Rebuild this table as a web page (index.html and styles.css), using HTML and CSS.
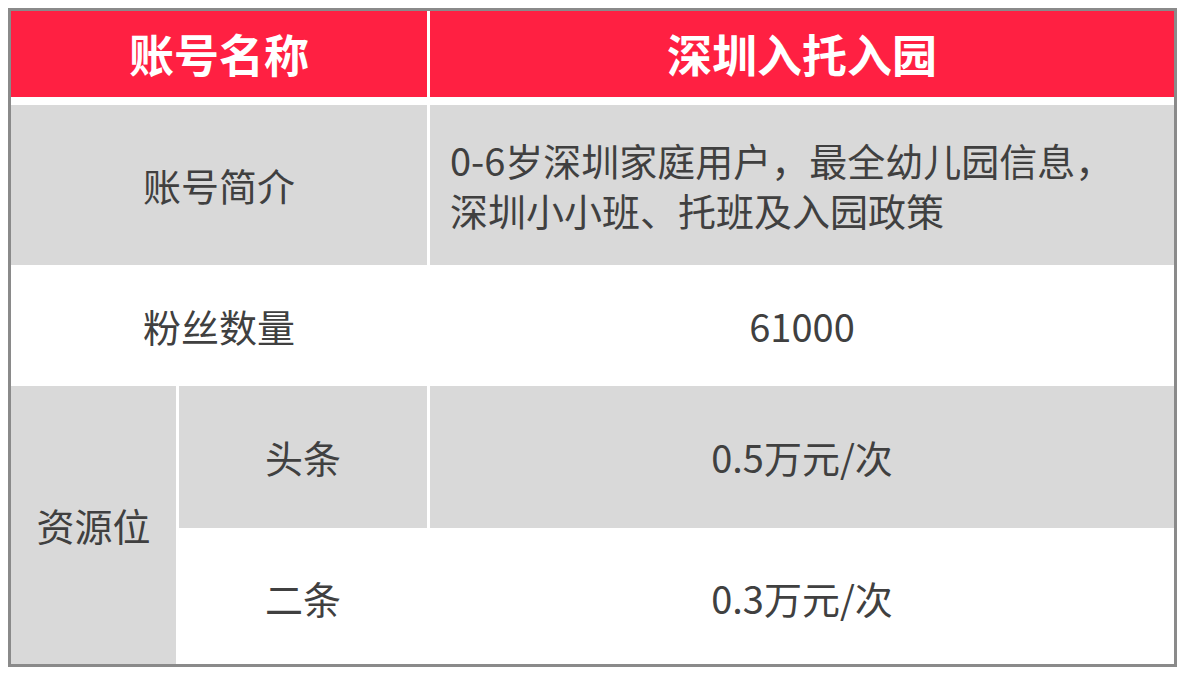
FILE: index.html
```html
<!DOCTYPE html>
<html lang="zh-CN">
<head>
<meta charset="utf-8">
<title>账号资源</title>
<link rel="stylesheet" href="styles.css">
</head>
<body>
<div class="sheet">
  <div class="cell head span2">账号名称</div>
  <div class="cell head">深圳入托入园</div>

  <div class="cell gray span2">账号简介</div>
  <div class="cell gray desc">0-6岁深圳家庭用户，最全幼儿园信息，<br>深圳小小班、托班及入园政策</div>

  <div class="cell span2">粉丝数量</div>
  <div class="cell">61000</div>

  <div class="cell gray res">资源位</div>
  <div class="cell gray">头条</div>
  <div class="cell gray">0.5万元/次</div>

  <div class="cell">二条</div>
  <div class="cell">0.3万元/次</div>
</div>
</body>
</html>
```

FILE: styles.css
```css
html, body {
  margin: 0;
  padding: 0;
  background: #ffffff;
}

body {
  padding: 8px 0 0 8px;
  font-family: "Noto Sans CJK SC", "Noto Sans", sans-serif;
}

.sheet {
  width: 1163px;
  height: 653px;
  border: 3px solid #8a8a8a;
  background: #ffffff;
  display: grid;
  grid-template-columns: 165px 248px 744px;
  grid-template-rows: 91px 160px 115px 142px 133px;
  column-gap: 3px;
  row-gap: 3px;
}

.cell {
  display: flex;
  align-items: center;
  justify-content: center;
  font-size: 38px;
  color: #404040;
  line-height: 50px;
  background: #ffffff;
}

.span2 {
  grid-column: 1 / 3;
}

.head {
  align-self: start;
  height: 86px;
  background: #ff2042;
  color: #ffffff;
  font-weight: 700;
  font-size: 45px;
}

.gray {
  background: #d9d9d9;
}

.desc {
  justify-content: flex-start;
  padding-left: 20px;
}

.res {
  grid-column: 1;
  grid-row: 4 / 6;
}
```
